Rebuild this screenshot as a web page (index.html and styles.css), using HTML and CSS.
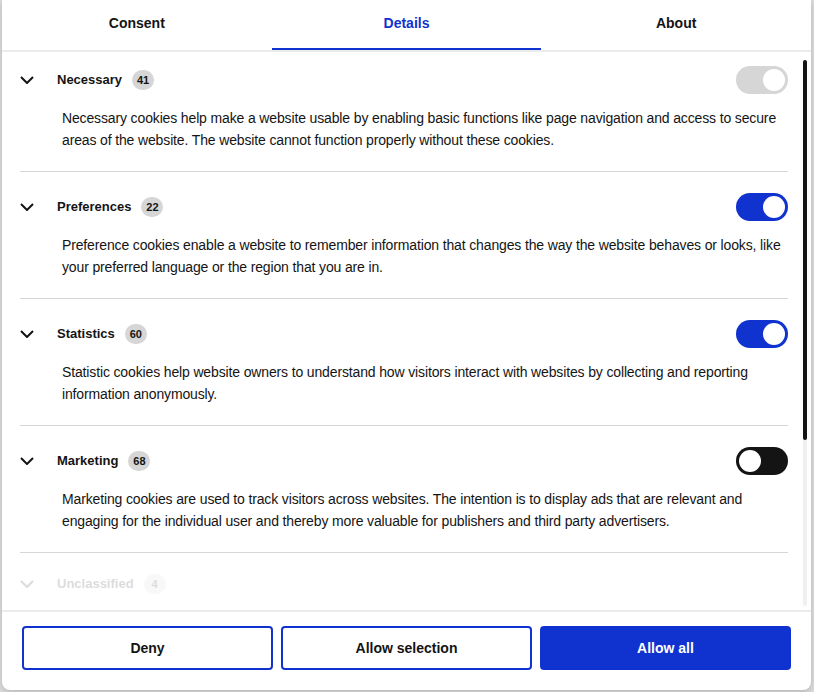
FILE: index.html
```html
<!DOCTYPE html>
<html lang="en">
<head>
  <meta charset="UTF-8">
  <meta name="viewport" content="width=device-width, initial-scale=1.0">
  <title>Cookie consent</title>
  <link rel="stylesheet" href="styles.css">
</head>
<body>
  <div class="dialog">
    <nav class="tabs">
      <a href="#" class="tab">Consent</a>
      <a href="#" class="tab active">Details</a>
      <a href="#" class="tab">About</a>
    </nav>

    <div class="levels">
      <section class="level">
        <div class="level-head">
          <svg class="chevron" width="14" height="8" viewBox="0 0 14 8"><polyline points="1,1 7,7 13,1" /></svg>
          <span class="level-name">Necessary</span>
          <span class="count">41</span>
          <span class="toggle disabled"></span>
        </div>
        <p class="level-text">Necessary cookies help make a website usable by enabling basic functions like page navigation and access to secure areas of the website. The website cannot function properly without these cookies.</p>
      </section>

      <section class="level">
        <div class="level-head">
          <svg class="chevron" width="14" height="8" viewBox="0 0 14 8"><polyline points="1,1 7,7 13,1" /></svg>
          <span class="level-name">Preferences</span>
          <span class="count">22</span>
          <span class="toggle on"></span>
        </div>
        <p class="level-text">Preference cookies enable a website to remember information that changes the way the website behaves or looks, like your preferred language or the region that you are in.</p>
      </section>

      <section class="level">
        <div class="level-head">
          <svg class="chevron" width="14" height="8" viewBox="0 0 14 8"><polyline points="1,1 7,7 13,1" /></svg>
          <span class="level-name">Statistics</span>
          <span class="count">60</span>
          <span class="toggle on"></span>
        </div>
        <p class="level-text">Statistic cookies help website owners to understand how visitors interact with websites by collecting and reporting information anonymously.</p>
      </section>

      <section class="level">
        <div class="level-head">
          <svg class="chevron" width="14" height="8" viewBox="0 0 14 8"><polyline points="1,1 7,7 13,1" /></svg>
          <span class="level-name">Marketing</span>
          <span class="count">68</span>
          <span class="toggle off"></span>
        </div>
        <p class="level-text">Marketing cookies are used to track visitors across websites. The intention is to display ads that are relevant and engaging for the individual user and thereby more valuable for publishers and third party advertisers.</p>
      </section>

      <section class="level faded">
        <div class="level-head">
          <svg class="chevron" width="14" height="8" viewBox="0 0 14 8"><polyline points="1,1 7,7 13,1" /></svg>
          <span class="level-name">Unclassified</span>
          <span class="count">4</span>
        </div>
      </section>

      <div class="scrollbar"><div class="thumb"></div></div>
    </div>

    <footer class="actions">
      <button class="btn">Deny</button>
      <button class="btn">Allow selection</button>
      <button class="btn primary">Allow all</button>
    </footer>
  </div>
</body>
</html>
```

FILE: styles.css
```css
html, body { height: 100%; }
body { margin: 0; background: #dcdcdc; font-family: "Liberation Sans", Arial, sans-serif; color: #141414; overflow: hidden; }

.dialog { height: 690px; margin: 0 3px 0 2px; background: #fff; border-radius: 0 0 8px 8px; box-shadow: 0 2px 6px rgba(0,0,0,.18); display: flex; flex-direction: column; overflow: hidden; }

.tabs { display: flex; border-bottom: 2px solid #ebebeb; }
.tab { flex: 1; text-align: center; padding: 14px 0 16px; line-height: 18px; font-size: 14px; font-weight: bold; color: #141414; text-decoration: none; border-bottom: 2px solid transparent; }
.tab.active { color: #1032cf; border-bottom-color: #1032cf; }

.levels { flex: 1; position: relative; overflow: hidden; margin-right: 4px; padding: 0 19px 0 18px; }

/* custom scrollbar, drawn over the list */
.scrollbar { position: absolute; top: 8px; bottom: 4px; right: 0; width: 4px; border-radius: 2px; background: #f0f0f0; }
.thumb { height: 380px; border-radius: 2px; background: #141414; }

.level { padding: 21px 0 20px; border-bottom: 1px solid #d6d6d6; }
.level:first-child { padding-top: 14px; }
.level-head { display: flex; align-items: center; min-height: 20px; }
.chevron { fill: none; stroke: #141414; stroke-width: 2; margin-right: 23px; }
.level-name { font-size: 13px; font-weight: bold; line-height: 20px; }
.count { margin-left: 10px; min-width: 22px; height: 20px; padding: 0 4px; box-sizing: border-box; border-radius: 10px; background: #d6d6d6; font-size: 11px; font-weight: bold; line-height: 20px; text-align: center; }
.level-text { margin: 13px 0 0 42px; font-size: 14px; letter-spacing: -.14px; line-height: 22px; }

.toggle { margin-left: auto; position: relative; width: 52px; height: 28px; border-radius: 14px; background: #d6d6d6; }
.toggle::after { content: ""; position: absolute; top: 3px; left: 27px; width: 22px; height: 22px; border-radius: 50%; background: #fff; }
.toggle.on { background: #1032cf; }
.toggle.off { background: #141414; }
.toggle.off::after { left: 3px; }

.faded { opacity: .15; border-bottom: 0; }

.actions { display: flex; gap: 8px; padding: 14px 20px 20px; border-top: 2px solid #ebebeb; }
.btn { flex: 1; height: 44px; border: 2px solid #1032cf; border-radius: 4px; background: #fff; color: #141414; font-family: inherit; font-size: 14px; font-weight: bold; cursor: pointer; }
.btn.primary { background: #1032cf; color: #fff; }
```
